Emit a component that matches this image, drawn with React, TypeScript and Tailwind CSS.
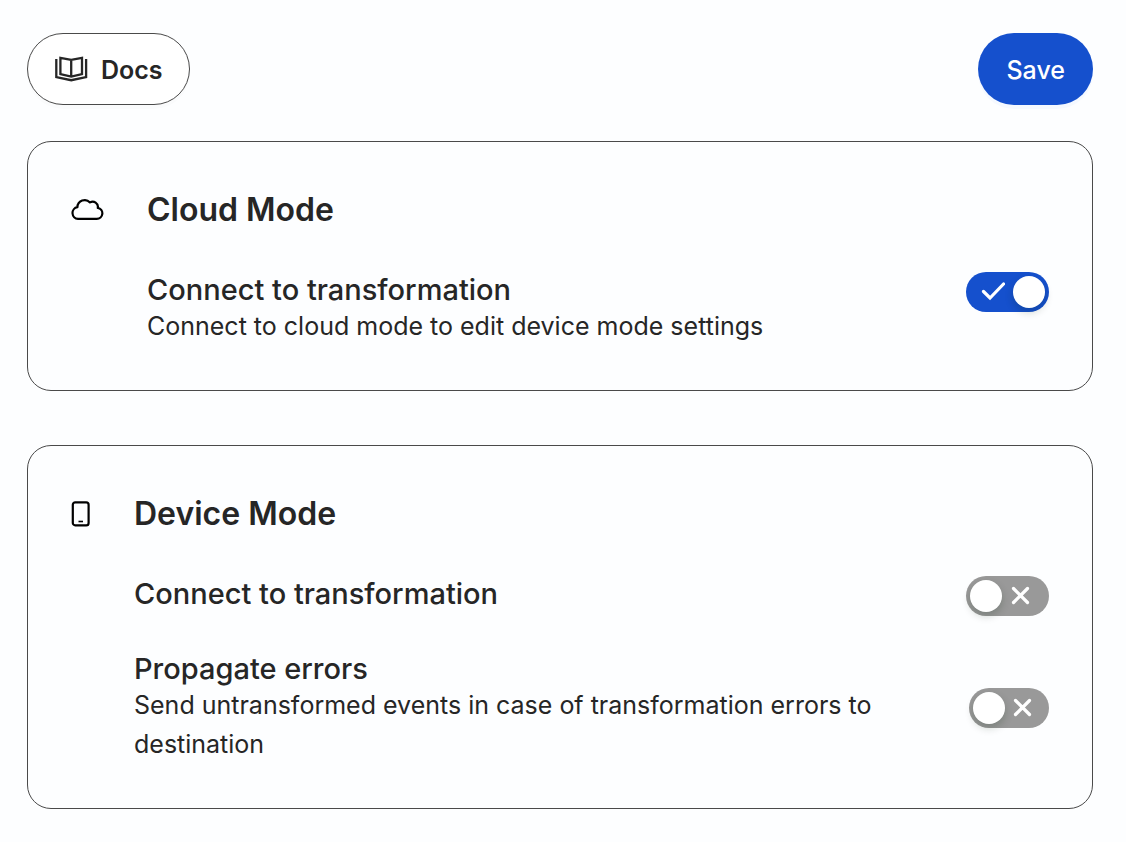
import type { ReactNode } from 'react';
import { useId, useState } from 'react';
import clsx from 'clsx';

function DocsIcon() {
  return (
    <svg
      viewBox="0 0 34 28"
      className="h-7 w-[34px]"
      fill="none"
      stroke="currentColor"
      strokeWidth="2.3"
      aria-hidden="true"
    >
      <path d="M17.2 4.9 6.4 2.9v16.2l10.8 2.4L28 19.1V2.9L17.2 4.9Zm0 0v16.6" />
      <path d="M2.3 4v18l14.9 3.2L32.1 22V4" />
    </svg>
  );
}

function CloudIcon() {
  return (
    <svg
      viewBox="0 0 33 24"
      className="h-6 w-[33px]"
      fill="none"
      stroke="currentColor"
      strokeWidth="2.2"
      strokeLinejoin="round"
      aria-hidden="true"
    >
      <path d="M7 20.9A5.9 5.9 0 0 1 6.4 9.2 7.3 7.3 0 0 1 19 4.4a5.2 5.2 0 0 1 7.8 5.4 5.6 5.6 0 0 1-1.1 11.1Z" />
    </svg>
  );
}

function MobileIcon() {
  return (
    <svg viewBox="0 0 20 26" className="h-[26px] w-5" fill="none" stroke="currentColor" aria-hidden="true">
      <rect x="1.8" y="1.3" width="15.8" height="23" rx="2.4" strokeWidth="2.2" />
      <path d="M7.5 20.5h4.5" strokeWidth="1.6" />
    </svg>
  );
}

type SwitchProps = {
  id: string;
  checked: boolean;
  onChange: (checked: boolean) => void;
  compact?: boolean;
};

function Switch({ id, checked, onChange, compact }: SwitchProps) {
  return (
    <span className={clsx('relative h-10 shrink-0', compact ? 'w-20' : 'w-[83px]')}>
      <input
        id={id}
        type="checkbox"
        role="switch"
        checked={checked}
        onChange={(e) => onChange(e.target.checked)}
        className="block h-10 w-full cursor-pointer appearance-none rounded-full bg-[#999999] checked:bg-[#1550cd]"
      />
      <span
        className={clsx(
          'pointer-events-none absolute top-1 size-8 rounded-full bg-white shadow-[0_4px_8px_rgba(0,35,11,0.2)]',
          checked ? 'right-1' : 'left-1',
        )}
      />
      <svg
        viewBox="0 0 24 24"
        className={clsx(
          'pointer-events-none absolute top-2 size-6',
          checked ? 'left-[15px]' : compact ? 'right-3.5' : 'right-4',
        )}
        fill="none"
        stroke="white"
        strokeWidth="3.2"
        strokeLinecap="round"
        aria-hidden="true"
      >
        {checked ? <path d="M2.5 11.5 9 18 22.5 4" /> : <path d="m4.5 4.5 14 14m0-14-14 14" />}
      </svg>
    </span>
  );
}

type SettingRowProps = {
  label: string;
  description?: string;
  defaultChecked?: boolean;
  centered?: boolean;
};

function SettingRow({ label, description, defaultChecked = false, centered }: SettingRowProps) {
  const id = useId();
  const [checked, setChecked] = useState(defaultChecked);

  return (
    <div className={clsx('flex justify-between gap-8', centered ? 'items-center' : 'items-start')}>
      <div className="max-w-[780px]">
        <label htmlFor={id} className="block text-[29px] leading-[35px] font-medium">
          {label}
        </label>
        {description && <p className="text-[25px] leading-[39px]">{description}</p>}
      </div>
      <Switch id={id} checked={checked} onChange={setChecked} compact={centered} />
    </div>
  );
}

type ModeCardProps = {
  icon: ReactNode;
  title: string;
  children: ReactNode;
};

function ModeCard({ icon, title, children }: ModeCardProps) {
  return (
    <section className="flex gap-[43px] rounded-3xl border border-[#4a4a4a] px-[43px] py-11">
      <div className="flex h-12 shrink-0 items-center text-black">{icon}</div>
      <div className="flex-1">
        <h2 className="text-[32px] leading-[48px] font-semibold">{title}</h2>
        <div className="mt-[38px] flex flex-col gap-[35px]">{children}</div>
      </div>
    </section>
  );
}

export default function App() {
  return (
    <main className="min-h-screen bg-[#fdfeff] py-[33px] pr-[33px] pl-[27px] font-[Inter,sans-serif] text-[#262626]">
      <header className="flex items-center justify-between">
        <button
          type="button"
          className="flex h-[72px] items-center gap-[13px] rounded-full border border-[#4a4a4a] bg-white px-[26px] text-[25px] font-semibold shadow-[0_4px_0_rgba(0,0,0,0.01)]"
        >
          <DocsIcon />
          <span className="pt-1">Docs</span>
        </button>
        <button
          type="button"
          className="h-[72px] rounded-full bg-[#1550cd] px-7 pt-1 text-[25px] font-medium text-white shadow-[0_4px_0_rgba(5,80,255,0.03)]"
        >
          Save
        </button>
      </header>

      <div className="mt-9 flex flex-col gap-[54px]">
        <ModeCard icon={<CloudIcon />} title="Cloud Mode">
          <SettingRow
            label="Connect to transformation"
            description="Connect to cloud mode to edit device mode settings"
            defaultChecked
          />
        </ModeCard>
        <ModeCard icon={<MobileIcon />} title="Device Mode">
          <SettingRow label="Connect to transformation" />
          <SettingRow
            label="Propagate errors"
            description="Send untransformed events in case of transformation errors to destination"
            centered
          />
        </ModeCard>
      </div>
    </main>
  );
}
